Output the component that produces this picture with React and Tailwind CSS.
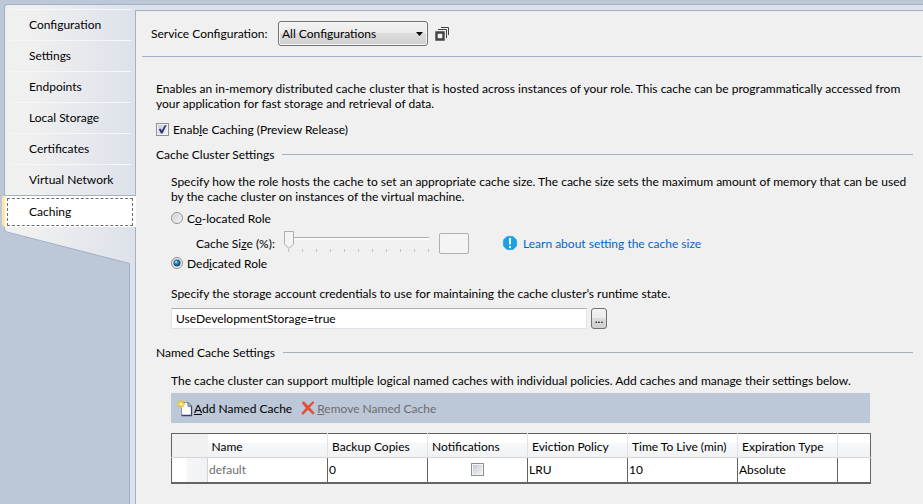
import React from 'react';

const TABS = ['Configuration', 'Settings', 'Endpoints', 'Local Storage', 'Certificates', 'Virtual Network'];

function SideTabs() {
  return (
    <nav className="flex w-[133px] shrink-0 flex-col">
      <ul className="ml-[2px] rounded-tl border-t border-l border-[#a3b1c6] bg-gradient-to-r from-[#f0f0f0] from-20% to-[#dde1ea] pt-1">
        {TABS.map((tab) => (
          <li key={tab} className="mr-1 ml-1 h-[31px] border-t border-[#f6f6f8]">
            <a href="#" className="block pl-5 leading-[30px]">{tab}</a>
          </li>
        ))}
      </ul>
      <a
        href="#"
        aria-current="page"
        className="relative -mr-px flex h-8 rounded-l-sm border-t border-l-[3px] border-t-[#a3b1c6] border-l-[#ffe8a6] bg-white pt-[2px] pr-[3px] pb-px pl-[2px]"
      >
        <span className="flex-1 border border-dashed border-[#707070] pl-[21px] leading-[26px]">Caching</span>
      </a>
      <svg className="ml-[2px] block h-[38px] w-[131px]" viewBox="0 0 131 38" aria-hidden="true">
        <defs>
          <linearGradient id="fold" x1="0" x2="1">
            <stop offset="0.2" stopColor="#f0f0f0" />
            <stop offset="1" stopColor="#dde1ea" />
          </linearGradient>
        </defs>
        <path d="M0.5 0V1.5Q0.5 4 3 5L125.500 36.500V38H131V0Z" fill="url(#fold)" />
        <path d="M0.5 0V1.5Q0.5 4 3 5L125.500 36.500V38" fill="none" stroke="#a3b1c6" />
      </svg>
      <div className="w-[6px] flex-1 self-end border-l border-[#a3b1c6] bg-[#dde1ea]" />
    </nav>
  );
}

function GroupHeading({ children }) {
  return (
    <div className="flex h-4 items-center gap-2">
      <h2>{children}</h2>
      <div className="h-px flex-1 bg-[#a5afbe]" />
    </div>
  );
}

function Check({ id, checked, label }) {
  return (
    <span className="relative block size-[13px] shrink-0">
      <input
        id={id}
        type="checkbox"
        aria-label={label}
        defaultChecked={checked}
        className="peer block size-[13px] appearance-none border border-[#8e8f8f] bg-gradient-to-br from-[#c3c8d0] to-[#f6f6f6] shadow-[inset_0_0_0_1px_#f4f4f4]"
      />
      <svg className="pointer-events-none absolute inset-0 hidden peer-checked:block" viewBox="0 0 13 13" aria-hidden="true">
        <path d="M2.800 6.200 4.400 5.400 5.700 7.600 8.600 2.400 10.600 2 6.500 10.600 5 10.600Z" fill="#31347c" />
      </svg>
    </span>
  );
}

function Radio({ id, checked }) {
  return (
    <span className="relative block size-3 shrink-0">
      <input
        id={id}
        type="radio"
        name="role"
        defaultChecked={checked}
        className="peer block size-3 appearance-none rounded-full border border-[#8e8f8f] bg-gradient-to-br from-[#c8ccd2] to-[#f8f8f8] shadow-[inset_0_0_0_1px_#f0f0f0]"
      />
      <svg className="pointer-events-none absolute inset-0 hidden peer-checked:block" viewBox="0 0 12 12" aria-hidden="true">
        <circle cx="6" cy="6" r="3.500" fill="#17507a" />
        <circle cx="5.600" cy="5.400" r="2.200" fill="#2a9cc9" />
        <circle cx="5" cy="4.800" r="1" fill="#a9e4f5" />
      </svg>
    </span>
  );
}

function SizeSlider() {
  return (
    <span className="relative block h-6 w-[148px] shrink-0">
      <svg className="block h-6 w-[148px]" viewBox="0 0 148 24" aria-hidden="true">
        <path d="M5 6.500H146" stroke="#b0b0b0" />
        <path d="M5 7.500H146M5 8.500H146" stroke="#fafafa" />
        {[5, 19, 33, 47, 61, 75, 89, 103, 117, 131, 145].map((x) => (
          <path key={x} d={`M${x + 0.5} 18V21`} stroke="#c4c4c4" />
        ))}
        <path d="M1.500 0.500H10.500V13L6 17.500 1.500 13Z" fill="#f4f4f4" stroke="#adadad" />
      </svg>
      <input id="size" type="range" min="0" max="100" defaultValue="0" disabled className="absolute inset-0 m-0 h-6 w-full opacity-0" />
    </span>
  );
}

const th = 'border-r border-[#dfe2e6] pt-px pl-1 text-left font-normal whitespace-nowrap';
const td = 'border-r border-[#646464] pl-px';

function CacheTable() {
  return (
    <table className="mt-[10px] w-full table-fixed border-collapse border border-b-2 border-[#646464] bg-white">
      <colgroup>
        <col className="w-9" />
        <col className="w-[120px]" />
        <col className="w-[100px]" />
        <col className="w-[100px]" />
        <col className="w-[100px]" />
        <col className="w-[110px]" />
        <col className="w-[100px]" />
        <col />
      </colgroup>
      <thead>
        <tr className="h-6 border-b border-[#d5d5d5] bg-[linear-gradient(#fff_40%,#f7f8fa_40%,#f1f2f4)]">
          <th className="bg-[#f0f0f0]" aria-label="Row" />
          <th className={th}>Name</th>
          <th className={th}>Backup Copies</th>
          <th className={th}>Notifications</th>
          <th className={th}>Eviction Policy</th>
          <th className={th}>Time To Live (min)</th>
          <th className={th}>Expiration Type</th>
          <th aria-label="Spare" />
        </tr>
      </thead>
      <tbody>
        <tr className="h-[25px]">
          <td className="border-r border-[#d5d5d5] bg-[linear-gradient(90deg,#fff_40%,#f5f6f8_40%,#f1f2f4)]" />
          <td className={`${td} text-[#6d6d6d]`}>default</td>
          <td className={td}>0</td>
          <td className="border-r border-[#646464]">
            <span className="flex justify-center"><Check label="Notifications" /></span>
          </td>
          <td className={td}>LRU</td>
          <td className={td}>10</td>
          <td className={td}>Absolute</td>
          <td />
        </tr>
      </tbody>
    </table>
  );
}

export default function App() {
  return (
    <div className="flex min-h-screen bg-[#bcc7d8] pt-1 pl-[2px] font-['Lato','Open_Sans',sans-serif] text-[12px] leading-[15px] text-black">
      <SideTabs />
      <div className="flex min-w-0 flex-1 flex-col border-t border-[#a3b1c6] bg-[#dde1ea] pt-[5px]">
        <main className="flex-1 border-t border-l border-[#a3b1c6] bg-[#f0f0f0] pl-[6px]">
          <div className="mr-px flex h-[46px] items-center border-b border-[#a3b1c6] pl-[9px]">
            <label htmlFor="config" className="w-[127px] whitespace-nowrap">Service Confi<u>g</u>uration:</label>
            <span className="relative block">
              <select
                id="config"
                className="block h-[25px] w-[150px] appearance-none rounded-[3px] border border-[#707070] bg-[linear-gradient(#f2f2f2,#ebebeb_50%,#dddddd_50%,#cfcfcf)] pl-[3px] shadow-[inset_0_0_0_1px_#f8f8f8]"
              >
                <option>All Configurations</option>
              </select>
              <svg className="pointer-events-none absolute top-[11px] right-[5px] h-1 w-[7px]" viewBox="0 0 7 4" aria-hidden="true">
                <path d="M0 0H7L3.500 4Z" />
              </svg>
            </span>
            <svg className="ml-[7px] size-[14px]" viewBox="0 0 14 14" fill="none" stroke="#424242" aria-hidden="true">
              <path d="M1.500 5.500H8.500V12.500H1.500Z" strokeWidth="2.400" />
              <path d="M3 2.500H11.500V11M6 0.500H13.500V8" />
            </svg>
          </div>

          <div className="pr-[10px] pl-[14px]">
            <p className="pt-6 whitespace-nowrap">
              Enables an in-memory distributed cache cluster that is hosted across instances of your role. This cache can be programmatically accessed from<br />
              your application for fast storage and retrieval of data.
            </p>
            <div className="mt-[10px] flex h-4 items-center gap-1">
              <Check id="enable" checked />
              <label htmlFor="enable">Enab<u>l</u>e Caching (Preview Release)</label>
            </div>
            <div className="mt-[9px]"><GroupHeading>Cache Cluster Settings</GroupHeading></div>

            <div className="pl-[15px]">
              <p className="mt-3 whitespace-nowrap">
                Specify how the role hosts the cache to set an appropriate cache size. The cache size sets the maximum amount of memory that can be used<br />
                by the cache cluster on instances of the virtual machine.
              </p>
              <div className="mt-[6px] flex h-4 items-center gap-1">
                <Radio id="colocated" />
                <label htmlFor="colocated">C<u>o</u>-located Role</label>
              </div>
              <div className="mt-[5px] flex h-6 items-center pl-[25px]">
                <label htmlFor="size" className="w-[87px] whitespace-nowrap">Cache Si<u>z</u>e (%):</label>
                <SizeSlider />
                <input aria-label="Cache size percent" disabled className="ml-2 h-[21px] w-[30px] rounded-xs border border-[#b0b0b0] bg-[#f4f4f4]" />
                <svg className="ml-[33px] size-4" viewBox="0 0 16 16" aria-hidden="true">
                  <circle cx="8" cy="8" r="7.500" fill="#c9d3da" />
                  <path d="M5 1.200H11L14.800 5V11L11 14.800H5L1.200 11V5Z" fill="#1ba1e2" />
                  <path d="M7 3H9V9.500H7ZM7 11H9V13H7Z" fill="#fff" />
                </svg>
                <a href="#" className="ml-[5px] whitespace-nowrap text-[#0066cc]">Learn about setting the cache size</a>
              </div>
              <div className="flex h-4 items-center gap-1">
                <Radio id="dedicated" checked />
                <label htmlFor="dedicated">Ded<u>i</u>cated Role</label>
              </div>
              <label htmlFor="storage" className="mt-[15px] block">
                Specify the storage account credentials to use for maintaining the cache cluster’s runtime state.
              </label>
              <div className="mt-[7px] flex gap-1">
                <input
                  id="storage"
                  defaultValue="UseDevelopmentStorage=true"
                  className="h-[21px] w-[416px] border border-[#e2e3ea] border-t-[#abadb3] bg-white px-1"
                />
                <button
                  type="button"
                  className="h-[21px] w-4 rounded-[3px] border border-[#707070] bg-[linear-gradient(#f2f2f2,#ebebeb_50%,#dddddd_50%,#cfcfcf)] leading-[15px]"
                >
                  ...
                </button>
              </div>
            </div>

            <div className="mt-[15px]"><GroupHeading>Named Cache Settings</GroupHeading></div>
            <div className="w-[715px] max-w-full pl-[15px]">
              <p className="mt-[13px] whitespace-nowrap">
                The cache cluster can support multiple logical named caches with individual policies. Add caches and manage their settings below.
              </p>
              <div className="mt-[5px] mr-px flex h-[30px] items-center gap-[9px] bg-[#bcc7d8] pl-[6px]">
                <button type="button" className="flex items-center">
                  <svg className="size-[17px]" viewBox="0 0 17 17" aria-hidden="true">
                    <path d="M4.500 2.500H11L14.500 6V15.500H4.500Z" fill="#fff" stroke="#8b98ae" />
                    <path d="M14.500 6V15.500H4.500" fill="none" stroke="#34466b" strokeWidth="1.300" />
                    <path d="M11 2.500V6.200H14.500Z" fill="#dbe3f0" stroke="#4f6288" />
                    <path d="M4 0V8M0 4H8M1 1 7 7M7 1 1 7" stroke="#f0c32d" strokeWidth="1.300" />
                    <circle cx="4" cy="4" r="1.600" fill="#fff7b0" />
                  </svg>
                  <span><u>A</u>dd Named Cache</span>
                </button>
                <button type="button" disabled className="flex items-center gap-[2px] text-[#6d6d6d]">
                  <svg className="size-[14px]" viewBox="0 0 14 14" aria-hidden="true">
                    <path d="M1 1.800 3 .800 7 5 12 .600 13 1.400 8.500 6.500 13.300 12 12 13.200 7 8.500 2 13.400.600 12.400 5.200 7Z" fill="#ee4a2c" stroke="#c9371f" strokeWidth=".4" />
                  </svg>
                  <span><u>R</u>emove Named Cache</span>
                </button>
              </div>
              <CacheTable />
            </div>
          </div>
        </main>
      </div>
    </div>
  );
}
